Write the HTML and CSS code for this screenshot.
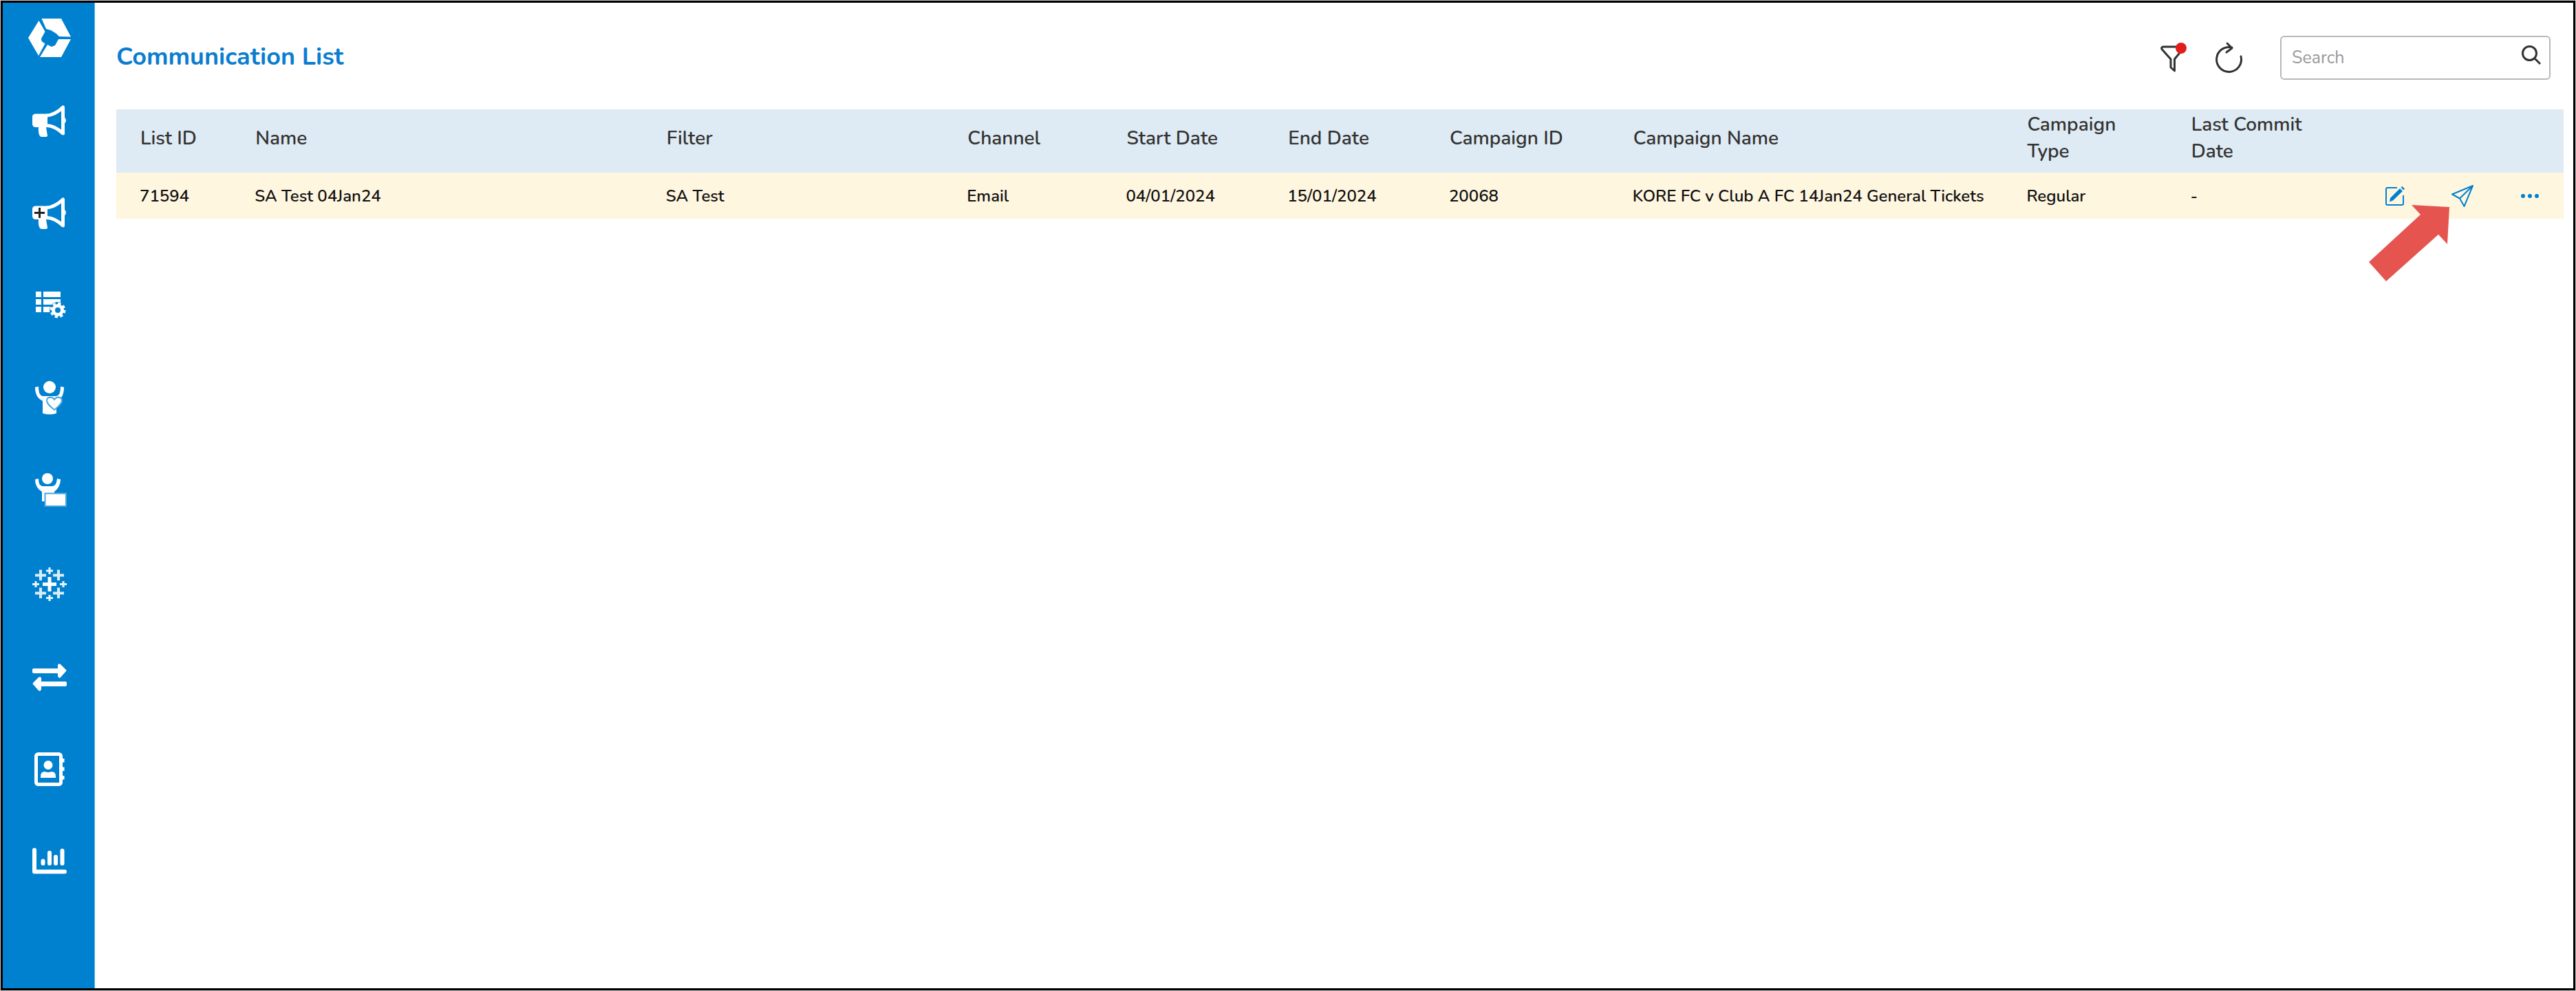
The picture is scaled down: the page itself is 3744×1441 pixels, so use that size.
FILE: index.html
```html
<!DOCTYPE html>
<html lang="en">
<head>
  <meta charset="UTF-8" />
  <meta name="viewport" content="width=device-width, initial-scale=1.0"/>
  <title>Communication List</title>
  <link rel="stylesheet" href="styles.css">
</head>
<body>

<div class="app">
  <nav class="sidebar">
    <a class="logo" href="#" aria-label="Home">
      <svg viewBox="0 0 62 56" width="62" height="56">
        <path d="M19.500 0H48L62 26.500 45 26 41 22 33 17 26 15Z"/>
        <path d="M15.500 3L24.500 19 19 29 19.500 33 24.500 36.500 15 54 0 28Z"/>
        <path d="M62 30L48 56H17L28 38 34 41 39 39 44 30Z"/>
      </svg>
    </a>
    <a href="#" aria-label="Campaigns">
      <svg viewBox="0 0 50 50">
        <path d="M5 12.500H22V32H20L22 44Q22 46 20 46H13Q11 46 10 43Q8.500 39 9 32H5Q0 32 0 27V17Q0 12.500 5 12.500Z"/>
        <path class="line" d="M21 15Q33 14 44.500 3V41Q33 30 21 29.500"/>
        <path d="M46 17Q49 19 49 22T46 27Z"/>
      </svg>
    </a>
    <a href="#" aria-label="New campaign">
      <svg viewBox="0 0 50 50">
        <path d="M5 12.500H22V32H20L22 44Q22 46 20 46H13Q11 46 10 43Q8.500 39 9 32H5Q0 32 0 27V17Q0 12.500 5 12.500Z"/>
        <path class="line" d="M21 15Q33 14 44.500 3V41Q33 30 21 29.500"/>
        <path d="M46 17Q49 19 49 22T46 27Z"/>
        <path class="plus" d="M10.500 15V30M3 22.500H18"/>
      </svg>
    </a>
    <a href="#" aria-label="List settings">
      <svg viewBox="0 0 50 50">
        <path d="M5 3h8v8H5zM16 3h25v8H16zM5 14h8v8H5zM16 14h25v8H16zM5 25h8v8H5zM16 25h12v8H16z"/>
        <circle class="cut" cx="37" cy="30" r="12"/>
        <circle class="teeth" cx="37" cy="30" r="9.500"/>
        <circle class="gear" cx="37" cy="30" r="6.500"/>
      </svg>
    </a>
    <a href="#" aria-label="Fans">
      <svg viewBox="0 0 50 50">
        <circle cx="25" cy="8" r="9"/>
        <path d="M4 8L9 7Q9 21 16 21H34Q41 21 41 7L46 8Q46 24 35 29V46Q25 49 15 46V28Q4 23 4 8Z"/>
        <path class="heart" d="M32 41C26 36 21 32 21 27.500C21 22 29 21 32 26C35 21 43 22 43 27.500C43 32 38 36 32 41Z"/>
      </svg>
    </a>
    <a href="#" aria-label="Sales">
      <svg viewBox="0 0 50 50">
        <circle cx="22" cy="7" r="8"/>
        <path d="M4 8L9 7Q9 18 15 18H29Q35 18 36 7L41 8Q41 19 32 26V40H14V26Q4 20 4 8Z"/>
        <path class="box" d="M18.500 28.500H49V47H18.500Z"/>
      </svg>
    </a>
    <a href="#" aria-label="Analytics">
      <svg viewBox="0 0 50 50">
        <path class="cross big" d="M25 16V37M15 26.500H35"/>
        <path class="cross mid" d="M12 5.500V21M4 13.500H20M38 5.500V21M30 13.500H46M12 31.500V47M4 39.500H20M38 31.500V47M30 39.500H46"/>
        <path class="cross small" d="M25 2V12M20 7H30M5 22V31M0 26.500H10M45 22V31M40 26.500H50M25 42V51M20 46.500H30"/>
      </svg>
    </a>
    <a href="#" aria-label="Transfers">
      <svg viewBox="0 0 50 50">
        <path d="M2 15H37V10Q38 7 41 9L49 17Q50 18 49 19L41 28Q38 30 37 26V22H2Q0 22 0 20V17Q0 15 2 15Z"/>
        <path d="M48 34H13V29Q12 26 9 28L1 36Q0 37 1 38L9 47Q12 49 13 45V41H48Q50 41 50 39V36Q50 34 48 34Z"/>
      </svg>
    </a>
    <a href="#" aria-label="Contacts">
      <svg viewBox="0 0 50 50">
        <rect class="line" x="5.500" y="5.500" width="36" height="44" rx="3"/>
        <circle cx="23" cy="21.500" r="6.500"/>
        <path d="M12 40V38Q12 31 18 31Q23 33 28 31Q34 31 34 38V40Z"/>
        <path d="M43 12h3.500v5.500H43zM43 24.500h3.500v5.500H43zM43 37h3.500v5.500H43z"/>
      </svg>
    </a>
    <a href="#" aria-label="Reports">
      <svg viewBox="0 0 50 50">
        <path class="axis" d="M3 11V42.500H47"/>
        <path class="bars" d="M15.500 27V30.500M25 15V30.500M34 21V30.500M43.500 12V30.500"/>
      </svg>
    </a>
  </nav>

  <main class="content">
    <header class="topbar">
      <h1>Communication List</h1>
      <button class="icon-btn filter-btn" aria-label="Filter">
        <svg viewBox="0 0 38 44" width="38" height="44">
          <path d="M4 6H32Q34 7 32 10L20.500 24V41L15 36V24L2.500 10Q0 7 4 6Z"/>
          <circle cx="30" cy="8" r="8"/>
        </svg>
      </button>
      <button class="icon-btn" aria-label="Refresh">
        <svg viewBox="0 0 40 44" width="40" height="44">
          <path d="M37 20A18 18 0 1 1 24 7M17 1L24 8L16 14"/>
        </svg>
      </button>
      <div class="search">
        <input type="text" placeholder="Search" aria-label="Search">
        <button aria-label="Run search">
          <svg viewBox="0 0 28 28" width="28" height="28">
            <circle cx="11.500" cy="11.500" r="10"/>
            <path d="M18.500 18.500L27 27"/>
          </svg>
        </button>
      </div>
    </header>

    <table class="list">
      <colgroup>
        <col class="c-id"><col class="c-name"><col class="c-filter"><col class="c-channel"><col class="c-start">
        <col class="c-end"><col class="c-cid"><col class="c-cname"><col class="c-type"><col class="c-commit"><col class="c-actions">
      </colgroup>
      <thead>
        <tr>
          <th>List ID</th>
          <th>Name</th>
          <th>Filter</th>
          <th>Channel</th>
          <th>Start Date</th>
          <th>End Date</th>
          <th>Campaign ID</th>
          <th>Campaign Name</th>
          <th>Campaign Type</th>
          <th>Last Commit Date</th>
          <th></th>
        </tr>
      </thead>
      <tbody>
        <tr>
          <td>71594</td>
          <td>SA Test 04Jan24</td>
          <td>SA Test</td>
          <td>Email</td>
          <td>04/01/2024</td>
          <td>15/01/2024</td>
          <td>20068</td>
          <td>KORE FC v Club A FC 14Jan24 General Tickets</td>
          <td>Regular</td>
          <td>-</td>
          <td class="actions-cell">
            <div class="actions">
              <button aria-label="Edit">
                <svg viewBox="0 0 30 30" width="30" height="30">
                  <path d="M18 3H4Q2 3 2 5V26Q2 28 4 28H25Q27 28 27 26V14"/>
                  <path class="fill" d="M8 18L22 4L26 8L12 21.500L7 23.500ZM23.500 2.500L25.500 1L29 4.500L27.500 6.500Z"/>
                </svg>
              </button>
              <button class="send" aria-label="Send">
                <svg viewBox="0 0 32 32" width="32" height="32">
                  <path d="M31 1L1 13.500L12 19.500L18.500 31ZM31 1L12 19.500"/>
                </svg>
                <svg class="pointer" viewBox="0 0 118 112" width="118" height="112">
                  <path d="M1 84L26 112L102 44L115 58L118 4L63 1L76 15Z"/>
                </svg>
              </button>
              <button aria-label="More">
                <svg viewBox="0 0 28 8" width="28" height="8">
                  <path class="fill" d="M1 4a3 3 0 1 0 6 0a3 3 0 1 0-6 0M11 4a3 3 0 1 0 6 0a3 3 0 1 0-6 0M21 4a3 3 0 1 0 6 0a3 3 0 1 0-6 0"/>
                </svg>
              </button>
            </div>
          </td>
        </tr>
      </tbody>
    </table>
  </main>
</div>

</body>
</html>
```
FILE: styles.css
```css
* { box-sizing: border-box; }
body { margin: 0; padding: 1px; background: #c8c8c8; color: #111; font-family: Nunito, "Noto Sans", sans-serif; }
button { background: none; border: none; padding: 0; cursor: pointer; font: inherit; }
svg { display: block; overflow: visible; }

.app { display: flex; min-height: calc(100vh - 2px); background: #fff; border: 3px solid #000; }

/* Sidebar */
.sidebar { flex: none; width: 134px; padding: 23px 0 0 2px; background: #0081d0; border-right: 1px solid #5cb0e4; display: flex; flex-direction: column; align-items: center; }
.sidebar a { height: 134px; flex: none; }
.sidebar .logo { height: 126px; }
.sidebar svg { fill: #fff; }
.sidebar a:not(.logo) svg { width: 50px; height: 50px; }
.sidebar .line { fill: none; stroke: #fff; stroke-width: 5; stroke-linejoin: round; }
.sidebar .plus { fill: none; stroke: #222; stroke-width: 3; }
.sidebar .cut { fill: #0081d0; }
.sidebar .gear { fill: none; stroke: #fff; stroke-width: 5; }
.sidebar .teeth { fill: none; stroke: #fff; stroke-width: 4; stroke-dasharray: 4 3.46; }
.sidebar .heart, .sidebar .box { stroke: #4aa6de; stroke-width: 2; }
.sidebar .cross { fill: none; stroke: #fff; }
.sidebar .big { stroke-width: 5; }
.sidebar .mid { stroke-width: 4; opacity: .85; }
.sidebar .small { stroke-width: 3; opacity: .9; }
.sidebar .axis { fill: none; stroke: #fff; stroke-width: 6; stroke-linecap: round; stroke-linejoin: round; }
.sidebar .bars { fill: none; stroke: #fff; stroke-width: 6; stroke-linecap: round; }

/* Page */
.content { flex: 1; min-width: 0; padding: 48px 14px 0 31px; }
.topbar { display: flex; align-items: center; height: 64px; margin-bottom: 43px; padding-right: 19px; }
h1 { flex: 1; margin: 0; padding-bottom: 2px; font-size: 36px; line-height: 48px; font-weight: 700; color: #0a7dd0; }
.icon-btn svg { fill: none; stroke: #333; stroke-width: 3; stroke-linejoin: round; stroke-linecap: round; }
.icon-btn circle { fill: #e31b1b; stroke: none; }
.filter-btn { margin-right: 42px; }
.search { display: flex; align-items: center; width: 393px; height: 64px; margin-left: 54px; padding: 0 12px 0 15px; border: 2px solid #b8b8b8; border-radius: 6px; }
.search input { flex: 1; min-width: 0; padding: 0; border: none; outline: none; background: none; font: inherit; font-size: 25px; color: #222; }
.search input::placeholder { color: #999; opacity: 1; }
.search button { padding-bottom: 8px; }
.search svg { fill: none; stroke: #333; stroke-width: 3; }

/* List table */
.list { width: 100%; table-layout: fixed; border-collapse: collapse; text-align: left; }
.list th, .list td { padding: 0 30px 0 35px; }
.list th { height: 92px; padding-bottom: 8px; background: #dfebf4; color: #333; font-size: 28px; line-height: 39px; font-weight: 600; }
.list td { height: 67px; padding-left: 34px; background: #fff6e0; color: #111; font-size: 24px; font-weight: 600; white-space: nowrap; }
.c-id { width: 4.7%; }
.c-name { width: 16.8%; }
.c-filter { width: 12.3%; }
.c-channel { width: 6.5%; }
.c-start { width: 6.6%; }
.c-end { width: 6.6%; }
.c-cid { width: 7.5%; }
.c-cname { width: 16.1%; }
.c-type { width: 6.7%; }
.c-commit { width: 7.1%; }

.list .actions-cell { padding: 0; }
.actions { display: flex; justify-content: flex-end; }
.actions button { position: relative; display: flex; align-items: center; justify-content: center; width: 98px; height: 67px; }
.actions svg { fill: none; stroke: #0081d0; stroke-width: 2; stroke-linejoin: round; }
.actions .fill { fill: #0081d0; stroke: none; }
.actions .pointer { position: absolute; top: 46px; left: -88px; fill: #e5544f; stroke: none; }
```
